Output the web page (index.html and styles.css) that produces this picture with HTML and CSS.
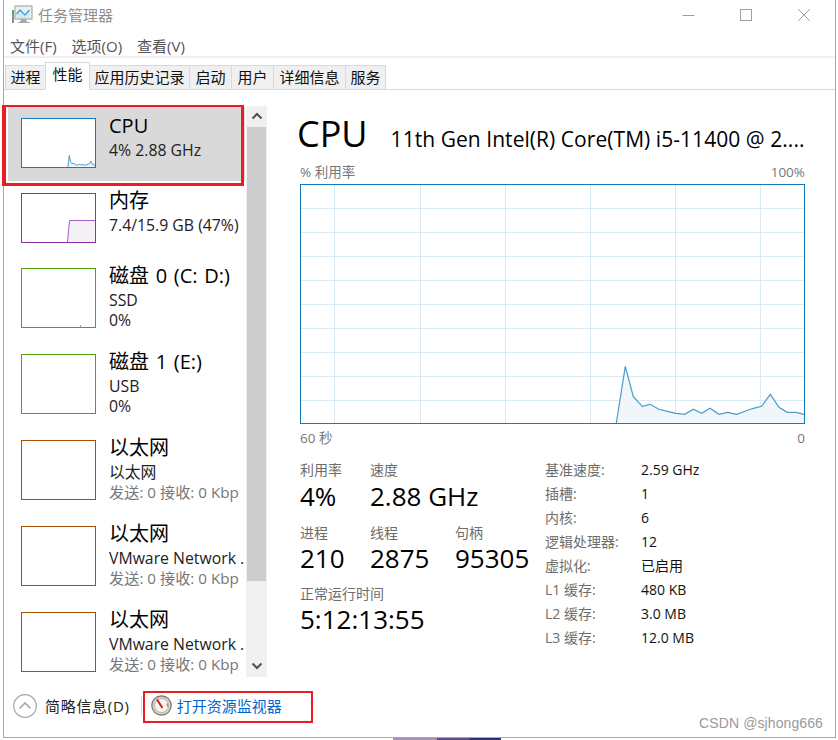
FILE: index.html
```html
<!DOCTYPE html>
<html lang="zh">
<head>
<meta charset="utf-8">
<title>任务管理器</title>
<link rel="stylesheet" href="styles.css">
</head>
<body>
<div class="page">
  <div class="window">
    <header class="titlebar">
      <svg class="app-icon" width="22" height="20" viewBox="0 0 22 20">
        <rect x="4" y="1" width="17" height="13" fill="#eef1f2" stroke="#9a9a9a"/>
        <path d="M5.5 9 9 5 14 10 18.5 5 V13 H5.5Z" fill="#bfe3f4" opacity=".6"/>
        <polyline points="5.5,9 9,5 12,8 14,10 18.5,5" fill="none" stroke="#2f9fd8" stroke-width="1.2"/>
        <path d="M10 14h5l1 3h3v1H7v-1h2z" fill="#a9a9a9"/>
        <rect x="1" y="5" width="2" height="4" fill="#4caf50"/>
        <rect x="1" y="9" width="2" height="9" fill="#8d8d8d"/>
      </svg>
      <span class="title-text">任务管理器</span>
      <div class="caption">
        <svg width="14" height="14" viewBox="0 0 14 14"><path d="M1.5 7.5h12" stroke="#a0a0a0"/></svg>
        <svg width="14" height="14" viewBox="0 0 14 14"><rect x="1.5" y="1.5" width="11" height="11" fill="none" stroke="#a0a0a0"/></svg>
        <svg width="14" height="14" viewBox="0 0 14 14"><path d="M1 1l12 12M13 1 1 13" stroke="#a0a0a0" fill="none"/></svg>
      </div>
    </header>
    <nav class="menubar">
      <span>文件(F)</span><span>选项(O)</span><span>查看(V)</span>
    </nav>
    <div class="tabs">
      <span class="tab w41">进程</span>
      <span class="tab active">性能</span>
      <span class="tab w100">应用历史记录</span>
      <span class="tab w42">启动</span>
      <span class="tab w42">用户</span>
      <span class="tab w72">详细信息</span>
      <span class="tab w40">服务</span>
    </div>
    <main class="main">
      <aside class="side">
        <div class="list">
          <div class="item selected short">
            <svg class="thumb cpu" viewBox="0 0 73 48">
              <polygon class="cpu-fill" points="45.9,48 47.3,36.4 48.5,42.6 49.8,44.6 51,44.2 52.3,45.2 53.6,45.6 54.8,46 56,46.2 57.4,45.2 58.6,46 59.9,45 61.2,46.2 62.4,45.8 63.8,46.2 65,45.6 66.2,45 67.5,44.6 68.8,42.2 70,44.8 71.3,45.8 73,46.2 73,48"/>
              <polyline class="cpu-line" points="45.9,48 47.3,36.4 48.5,42.6 49.8,44.6 51,44.2 52.3,45.2 53.6,45.6 54.8,46 56,46.2 57.4,45.2 58.6,46 59.9,45 61.2,46.2 62.4,45.8 63.8,46.2 65,45.6 66.2,45 67.5,44.6 68.8,42.2 70,44.8 71.3,45.8 73,46.2"/>
            </svg>
            <div class="info"><div class="name">CPU</div><div class="sub first">4% 2.88 GHz</div></div>
          </div>
          <div class="item short">
            <svg class="thumb mem" viewBox="0 0 73 48">
              <polygon class="mem-fill" points="45.5,48 47.5,26 73,26 73,48"/>
              <polyline class="mem-line" points="45.5,48 47.5,26.5 73,26.5"/>
            </svg>
            <div class="info"><div class="name">内存</div><div class="sub first">7.4/15.9 GB (47%)</div></div>
          </div>
          <div class="item">
            <svg class="thumb disk tall" viewBox="0 0 73 58"><path class="disk-tick" d="M58.5 58v-2"/></svg>
            <div class="info"><div class="name">磁盘 0 (C: D:)</div><div class="sub first">SSD</div><div class="sub">0%</div></div>
          </div>
          <div class="item">
            <svg class="thumb disk tall" viewBox="0 0 73 58"></svg>
            <div class="info"><div class="name">磁盘 1 (E:)</div><div class="sub first">USB</div><div class="sub">0%</div></div>
          </div>
          <div class="item">
            <svg class="thumb net tall" viewBox="0 0 73 58"></svg>
            <div class="info"><div class="name">以太网</div><div class="sub first">以太网</div><div class="sub muted">发送: 0 接收: 0 Kbp</div></div>
          </div>
          <div class="item">
            <svg class="thumb net tall" viewBox="0 0 73 58"></svg>
            <div class="info"><div class="name">以太网</div><div class="sub first">VMware Network .</div><div class="sub muted">发送: 0 接收: 0 Kbp</div></div>
          </div>
          <div class="item">
            <svg class="thumb net tall" viewBox="0 0 73 58"></svg>
            <div class="info"><div class="name">以太网</div><div class="sub first">VMware Network .</div><div class="sub muted">发送: 0 接收: 0 Kbp</div></div>
          </div>
        </div>
        <div class="scrollbar">
          <svg class="arrow" width="12" height="8" viewBox="0 0 12 8"><path d="M1.5 6.5 6 2l4.5 4.5" fill="none" stroke="#505050" stroke-width="2"/></svg>
          <div class="track"><div class="scroll-thumb"></div></div>
          <svg class="arrow" width="12" height="8" viewBox="0 0 12 8"><path d="M1.5 1.5 6 6l4.5-4.5" fill="none" stroke="#505050" stroke-width="2"/></svg>
        </div>
      </aside>
      <section class="detail">
        <div class="heading"><span class="big">CPU</span><span class="model">11th Gen Intel(R) Core(TM) i5-11400 @ 2....</span></div>
        <div class="axis top"><span>% 利用率</span><span>100%</span></div>
        <svg class="chart" width="505" height="240" viewBox="0 0 505 240">
          <g class="grid">
            <path d="M34.5 0V240M120.5 0V240M205.5 0V240M290.5 0V240M375.5 0V240M460.5 0V240"/>
            <path d="M0 24.5H505M0 48.5H505M0 72.5H505M0 96.5H505M0 120.5H505M0 144.5H505M0 168.5H505M0 192.5H505M0 216.5H505"/>
          </g>
          <polygon class="area" points="316.3,239 325.3,182.3 333.3,212.7 342.3,222.3 350,220.3 359,225.3 367.3,227.3 376,229.3 384.7,230.3 393.3,225.3 401.7,229.3 410,224.3 419,230.3 427.3,228.3 436.7,230.3 445,227.3 453.3,224.3 461.7,222.3 470.3,210.3 479,223.3 487.3,228.3 496,228.3 504,230.3 504,239"/>
          <polyline class="line" points="316.3,239 325.3,182.3 333.3,212.7 342.3,222.3 350,220.3 359,225.3 367.3,227.3 376,229.3 384.7,230.3 393.3,225.3 401.7,229.3 410,224.3 419,230.3 427.3,228.3 436.7,230.3 445,227.3 453.3,224.3 461.7,222.3 470.3,210.3 479,223.3 487.3,228.3 496,228.3 504,230.3"/>
          <rect class="frame" x=".5" y=".5" width="504" height="239"/>
        </svg>
        <div class="axis bottom"><span>60 秒</span><span>0</span></div>
        <div class="stats">
          <div class="live">
            <div class="live-row r1">
              <div class="cell c70"><div class="label">利用率</div><div class="value">4%</div></div>
              <div class="cell"><div class="label">速度</div><div class="value">2.88 GHz</div></div>
            </div>
            <div class="live-row">
              <div class="cell c70"><div class="label">进程</div><div class="value">210</div></div>
              <div class="cell c85"><div class="label">线程</div><div class="value">2875</div></div>
              <div class="cell"><div class="label">句柄</div><div class="value">95305</div></div>
            </div>
            <div class="live-row">
              <div class="cell"><div class="label">正常运行时间</div><div class="value">5:12:13:55</div></div>
            </div>
          </div>
          <dl class="specs">
            <dt>基准速度:</dt><dd>2.59 GHz</dd>
            <dt>插槽:</dt><dd>1</dd>
            <dt>内核:</dt><dd>6</dd>
            <dt>逻辑处理器:</dt><dd>12</dd>
            <dt>虚拟化:</dt><dd>已启用</dd>
            <dt>L1 缓存:</dt><dd>480 KB</dd>
            <dt>L2 缓存:</dt><dd>3.0 MB</dd>
            <dt>L3 缓存:</dt><dd>12.0 MB</dd>
          </dl>
        </div>
      </section>
    </main>
    <footer class="footer">
      <svg class="collapse" width="24" height="24" viewBox="0 0 24 24"><circle cx="12" cy="12" r="11.3" fill="#fff" stroke="#a8a8a8" stroke-width="1.2"/><path d="M6.5 14.5 12 9l5.5 5.5" fill="none" stroke="#a8a8a8" stroke-width="1.6"/></svg>
      <span class="brief">简略信息(D)</span>
      <span class="divider"></span>
      <svg class="gauge" width="21" height="21" viewBox="0 0 21 21"><circle cx="10.5" cy="10.5" r="9.7" fill="#d8d4cc" stroke="#77736c" stroke-width="1.2"/><circle cx="10.5" cy="10.5" r="7" fill="#f7f5f0" stroke="#a9a59c" stroke-width=".8"/><path d="M6 4.5 11.5 13" stroke="#c8201f" stroke-width="2"/><path d="M16 8.5a6 6 0 0 1 .5 3" stroke="#d9822b" stroke-width="1.4" fill="none"/></svg>
      <span class="link">打开资源监视器</span>
    </footer>
  </div>
  <div class="under"><span class="u1"></span><span class="u2"></span><span class="u3"></span></div>
  <div class="mark mark-cpu"></div>
  <div class="mark mark-link"></div>
  <div class="watermark">CSDN @sjhong666</div>
</div>
</body>
</html>
```
FILE: styles.css
```css
* { box-sizing: border-box; }
html, body { margin: 0; padding: 0; background: #fff; }
body { font-family: "Open Sans", "Noto Sans CJK SC", sans-serif; color: #000; }
.page { position: relative; width: 838px; height: 740px; overflow: hidden; }
.window { margin-left: 3px; width: 833px; height: 738px; background: #fff; border-left: 1px solid #a9a9a9; border-right: 1px solid #a9a9a9; border-bottom: 1px solid #a9a9a9; display: flex; flex-direction: column; }

.titlebar { height: 33px; display: flex; align-items: center; padding-left: 7px; padding-bottom: 4px; flex: none; }
.app-icon { margin-right: 5px; }
.title-text { font-size: 15px; color: #8f8f8f; }
.caption { margin-left: auto; display: flex; gap: 44px; padding-right: 24px; }

.menubar { height: 25px; flex: none; display: flex; gap: 15px; align-items: center; padding-left: 6px; padding-top: 1px; font-size: 15px; color: #555; border-bottom: 2px solid #f0f0f0; }

.tabs { height: 32px; flex: none; display: flex; align-items: flex-end; padding-left: 1px; border-bottom: 1px solid #d9d9d9; }
.tab { height: 25px; margin-bottom: -1px; padding-bottom: 2px; background: #f0f0f0; border: 1px solid #d9d9d9; border-left-width: 0; font-size: 15px; color: #111; display: flex; align-items: center; justify-content: center; }
.tab.w41 { width: 41px; border-left-width: 1px; }
.tab.w100 { width: 100px; }
.tab.w42 { width: 42px; }
.tab.w72 { width: 72px; }
.tab.w40 { width: 40px; }
.tab.active { width: 45px; height: 28px; background: #fff; border-bottom-color: #fff; border-left-width: 1px; margin-left: -1px; padding-bottom: 5px; }

.main { flex: none; height: 590px; display: flex; }
.side { width: 263px; flex: none; display: flex; padding-top: 16px; height: 588px; }
.list { width: 241px; flex: none; padding-top: 1px; padding-left: 4px; overflow: hidden; white-space: nowrap; }
.item { height: 86px; display: flex; padding-left: 13px; padding-top: 7px; overflow: hidden; }
.item.short { height: 75px; }
.item.selected { height: 74px; background: #d9d9d9; margin-bottom: 1px; }
.thumb { width: 75px; height: 50px; margin-top: 4px; flex: none; background: #fff; border: 1px solid; overflow: hidden; }
.thumb.tall { height: 60px; }
.thumb.cpu { border-color: #117dbb; }
.thumb.mem { border-color: #8b2fb0; }
.thumb.disk { border-color: #4da60c; }
.thumb.net { border-color: #a75000; }
.cpu-fill { fill: #f1f6fa; }
.cpu-line { fill: none; stroke: #4a9cc9; stroke-width: 1; }
.mem-fill { fill: #f4f2f4; }
.mem-line { fill: none; stroke: #a65fc4; stroke-width: 1; }
.disk-tick { stroke: #7fbf50; stroke-width: 1; }
.info { margin-left: 13px; min-width: 0; }
.name { font-size: 20px; line-height: 24px; word-spacing: 1.5px; color: #000; }
.sub { font-size: 15.8px; line-height: 20px; color: #222; }
.sub.first { margin-top: 2px; }
.sub.muted { font-size: 15.2px; color: #777; }

.scrollbar { width: 21px; margin-left: 1px; flex: none; background: #f0f0f0; display: flex; flex-direction: column; align-items: center; height: 571px; }
.arrow { flex: none; margin: 6px 0 7px; }
.track { flex: 1; width: 19px; min-height: 0; }
.scroll-thumb { height: 454px; background: #cdcdcd; }

.detail { flex: 1; padding-left: 33px; padding-right: 30px; min-width: 0; }
.heading { margin-left: -3px; margin-top: 18px; height: 52px; display: flex; align-items: baseline; white-space: nowrap; }
.big { font-size: 36px; line-height: 52px; }
.model { font-size: 21px; letter-spacing: .05px; margin-left: 23px; }
.axis { display: flex; justify-content: space-between; font-size: 13.5px; color: #777; }
.axis.top { height: 20px; line-height: 20px; margin-top: 2px; margin-bottom: 2px; }
.axis.bottom { height: 20px; line-height: 20px; margin-top: 4px; }
.chart { display: block; }
.grid path { stroke: #d9eaf4; fill: none; }
.frame { fill: none; stroke: #117dbb; }
.area { fill: #f1f6fa; }
.line { fill: none; stroke: #4a9cc9; stroke-width: 1.2; }

.stats { display: flex; margin-top: 12px; }
.live { width: 245px; flex: none; }
.live-row { display: flex; height: 61px; }
.live-row.r1 { height: 63px; }
.live-row + .live-row .value { margin-top: -1px; }
.cell { white-space: nowrap; }
.c70 { width: 70px; }
.c85 { width: 85px; }
.label { font-size: 14px; line-height: 20px; color: #6d6d6d; }
.value { font-size: 26px; line-height: 33px; color: #000; }
.specs { margin: -3px 0 0; display: grid; grid-template-columns: 96px auto; grid-auto-rows: 24px; align-items: center; }
.specs dt { font-size: 14px; color: #6d6d6d; }
.specs dd { margin: 0; font-size: 14px; color: #111; }

.footer { flex: 1; display: flex; align-items: center; padding-left: 9px; padding-bottom: 6px; }
.brief { font-size: 15px; letter-spacing: .7px; color: #222; margin-left: 8px; }
.divider { width: 1px; height: 20px; background: #dcdcdc; margin: 0 9px 0 11px; }
.link { font-size: 15px; color: #0066cc; margin-left: 5px; }

.under { height: 2px; margin-left: 393px; display: flex; }
.u1 { width: 44px; background: #a48fb8; }
.u2 { width: 33px; background: #5b4a92; }
.u3 { width: 31px; background: #2f2c79; }

.mark { position: absolute; border: 3px solid #ed1c24; }
.mark-cpu { left: 2px; top: 105px; width: 242px; height: 81px; border-top-width: 2px; border-left-width: 4px; }
.mark-link { left: 143px; top: 691px; width: 170px; height: 32px; border-width: 2px; }
.watermark { position: absolute; right: 15px; top: 715px; font-family: "Liberation Sans", sans-serif; font-size: 14px; letter-spacing: .1px; color: #9a9a9a; }
```
